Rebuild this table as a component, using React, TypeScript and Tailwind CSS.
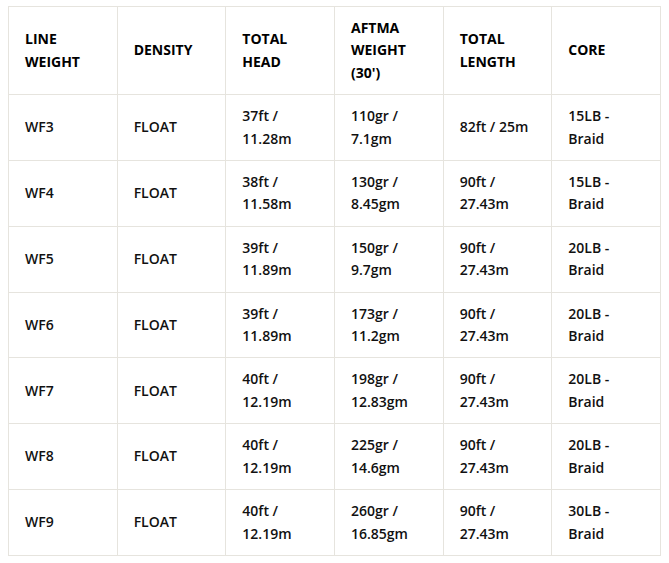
const rows = [
  ["WF3", "FLOAT", "37ft / 11.28m", "110gr / 7.1gm", "82ft / 25m", "15LB - Braid"],
  ["WF4", "FLOAT", "38ft / 11.58m", "130gr / 8.45gm", "90ft / 27.43m", "15LB - Braid"],
  ["WF5", "FLOAT", "39ft / 11.89m", "150gr / 9.7gm", "90ft / 27.43m", "20LB - Braid"],
  ["WF6", "FLOAT", "39ft / 11.89m", "173gr / 11.2gm", "90ft / 27.43m", "20LB - Braid"],
  ["WF7", "FLOAT", "40ft / 12.19m", "198gr / 12.83gm", "90ft / 27.43m", "20LB - Braid"],
  ["WF8", "FLOAT", "40ft / 12.19m", "225gr / 14.6gm", "90ft / 27.43m", "20LB - Braid"],
  ["WF9", "FLOAT", "40ft / 12.19m", "260gr / 16.85gm", "90ft / 27.43m", "30LB - Braid"],
];

const headers = ["LINE WEIGHT", "DENSITY", "TOTAL HEAD", "AFTMA WEIGHT (30')", "TOTAL LENGTH", "CORE"];

export default function App() {
  return (
    <div className="bg-white w-[669px] h-[563px] pl-2 pt-[6px] font-['Open_Sans',sans-serif] text-[14px] leading-[22.4px] text-[#111]">
      <table className="table-fixed border-collapse w-[653px]">
        <thead>
          <tr>
            {headers.map((h) => (
              <th
                key={h}
                className="border border-[#e6e4de] px-4 py-[10px] text-left align-middle font-bold uppercase text-black"
              >
                {h}
              </th>
            ))}
          </tr>
        </thead>
        <tbody>
          {rows.map((r) => (
            <tr key={r[0]}>
              {r.map((c, i) => (
                <td key={i} className="border border-[#e6e4de] px-4 py-[10px] align-middle font-semibold">
                  {c}
                </td>
              ))}
            </tr>
          ))}
        </tbody>
      </table>
    </div>
  );
}
